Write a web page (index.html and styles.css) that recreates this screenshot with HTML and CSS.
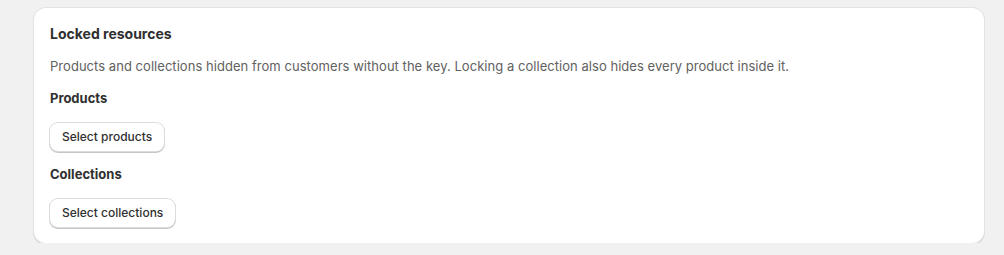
FILE: index.html
```html
<!DOCTYPE html>
<html lang="en">
<head>
  <meta charset="UTF-8">
  <meta name="viewport" content="width=device-width, initial-scale=1.0">
  <title>Locked resources</title>
  <link rel="stylesheet" href="styles.css">
</head>
<body>

  <div class="card">
    <h2 class="card-title">Locked resources</h2>
    <p class="card-text">Products and collections hidden from customers without the key. Locking a collection also hides every product inside it.</p>

    <div class="picker">
      <h3 class="picker-label">Products</h3>
      <button type="button" class="btn">Select products</button>
    </div>

    <div class="picker">
      <h3 class="picker-label">Collections</h3>
      <button type="button" class="btn">Select collections</button>
    </div>
  </div>

</body>
</html>
```

FILE: styles.css
```css
body {
  font-family: Inter, "Noto Sans", sans-serif;
  margin: 0;
  padding: 8px 20px 0 34px;
  background-color: #f1f1f1;
  color: #303030;
}

.card {
  width: 950px;
  box-sizing: border-box;
  padding: 16px;
  background-color: #fff;
  border-radius: 12px;
  box-shadow: 0 0 0 1px #e3e3e3, 0 1px 0 1px #d4d4d4;
  display: flex;
  flex-direction: column;
  gap: 12px;
}

.card-title {
  margin: 0;
  font-size: 14px;
  line-height: 20px;
  font-weight: 650;
}

.card-text {
  margin: 0;
  font-size: 13px;
  line-height: 20px;
  letter-spacing: 0.04px;
  color: #616161;
}

.picker {
  display: flex;
  flex-direction: column;
  align-items: flex-start;
  gap: 15px;
}

.picker + .picker {
  margin-top: 1px;
}

.picker-label {
  margin: 0;
  font-size: 13px;
  line-height: 20px;
  font-weight: 650;
}

.btn {
  font-family: inherit;
  font-size: 12px;
  font-weight: 550;
  line-height: 16px;
  color: #303030;
  height: 28px;
  padding: 6px 12px;
  background-color: #fff;
  border: none;
  border-radius: 8px;
  box-shadow: 0 0 0 1px #dcdcdc, 0 1px 0 1px #c6c6c6;
  cursor: pointer;
}

.btn:hover {
  background-color: #f7f7f7;
}
```
